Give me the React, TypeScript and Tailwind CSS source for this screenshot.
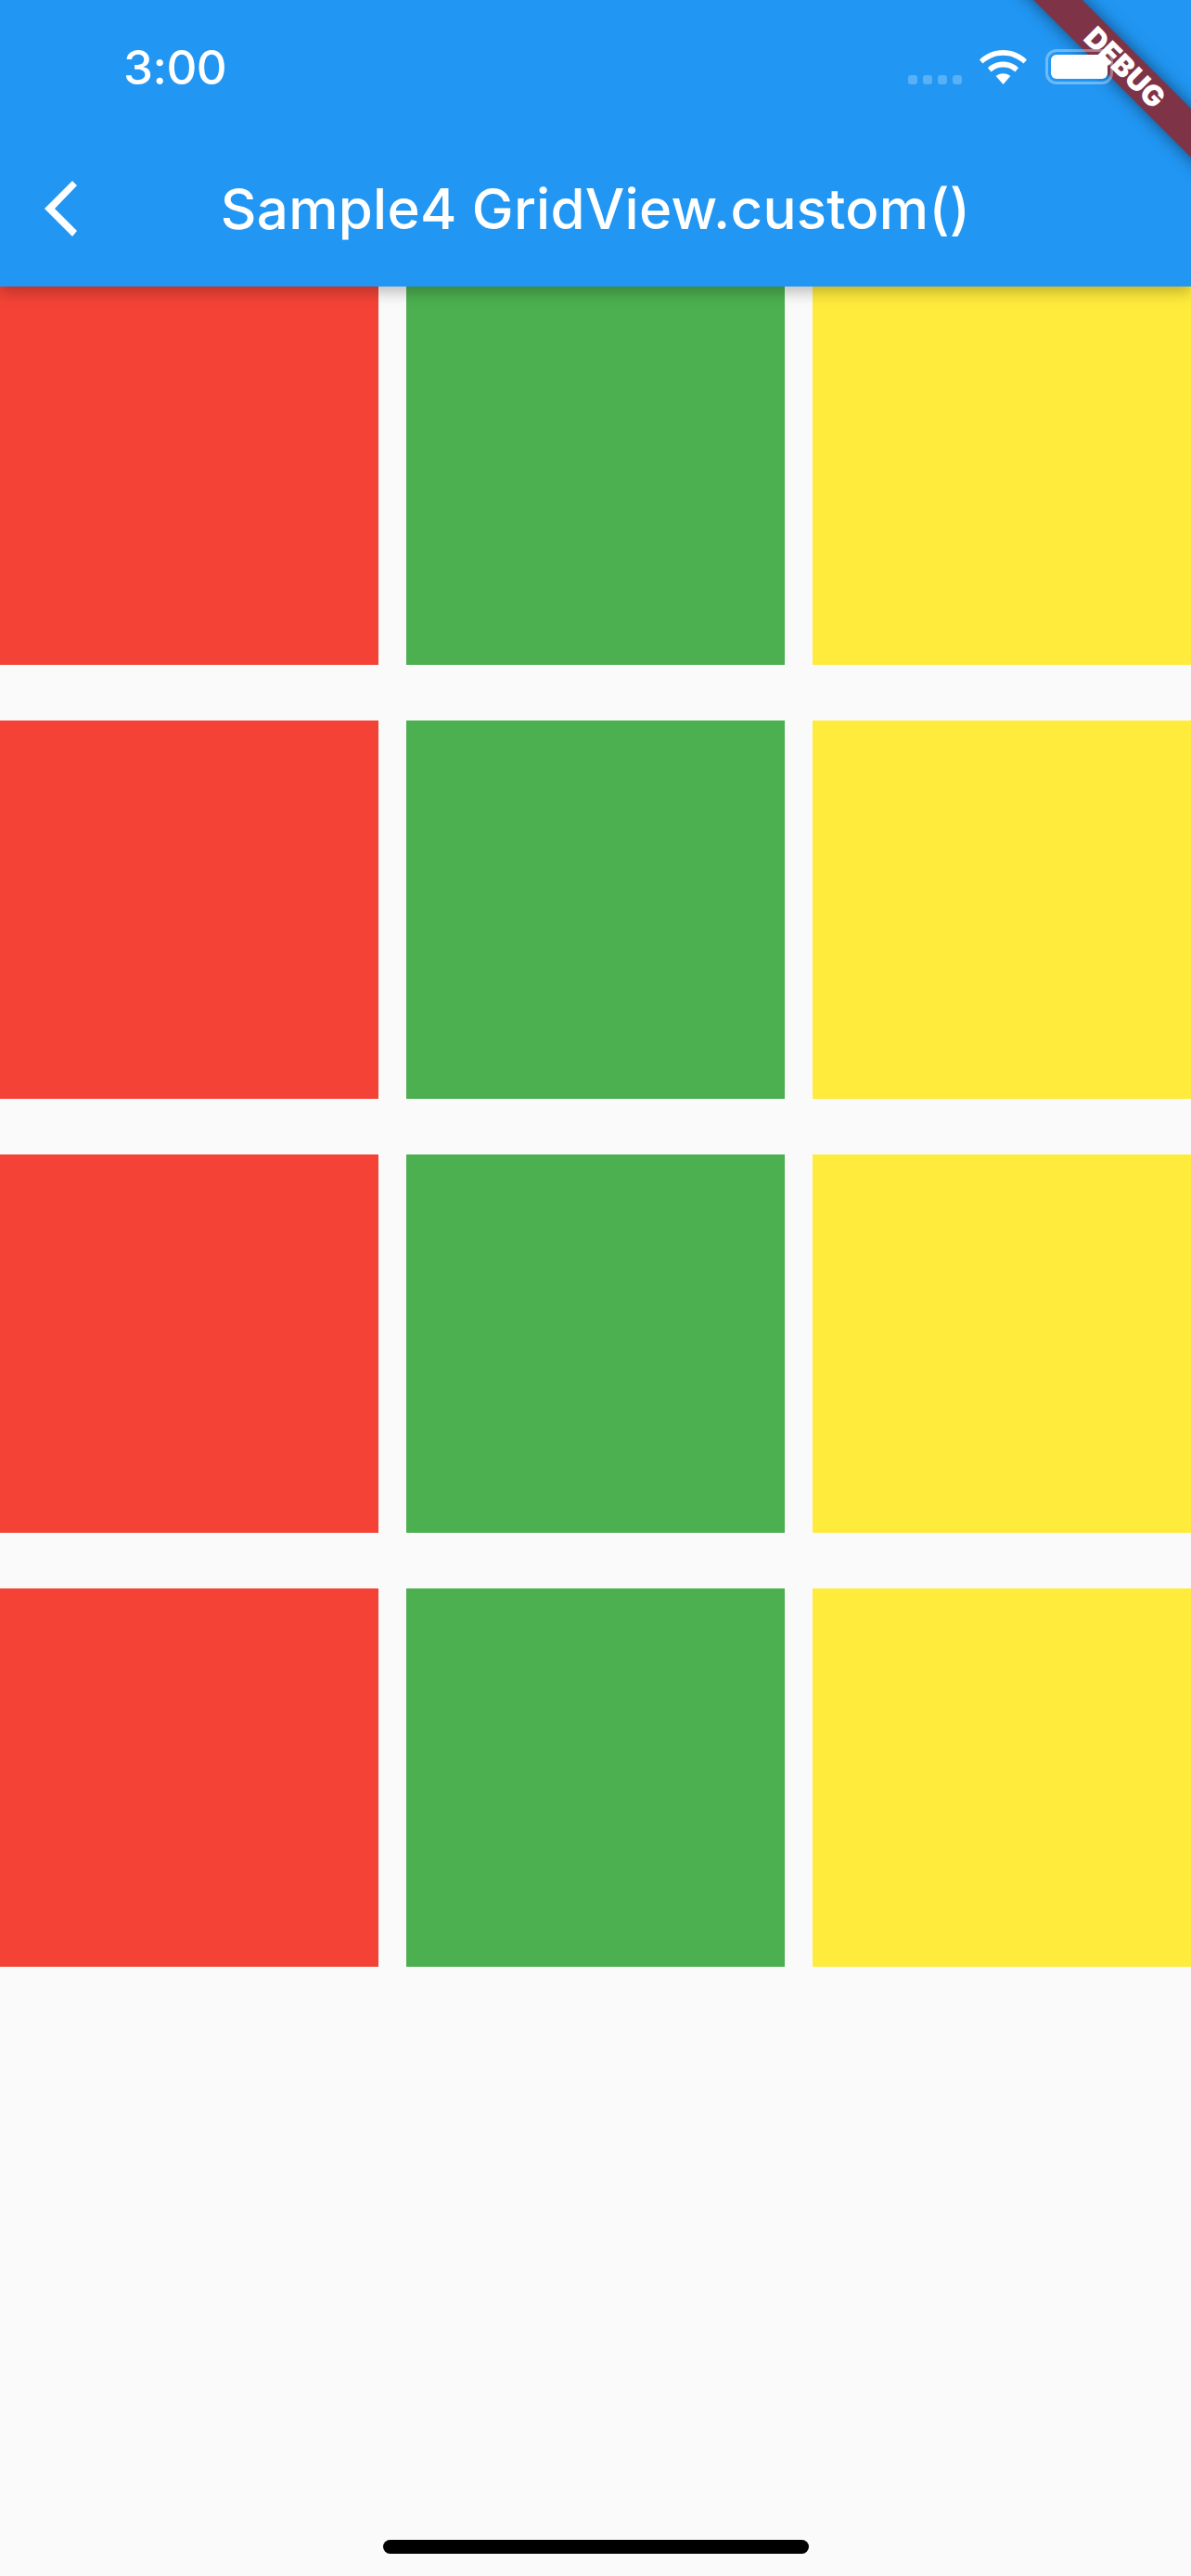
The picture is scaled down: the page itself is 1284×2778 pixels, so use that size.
import React from "react";

const rows = [0, 1, 2, 3];
const tileColors = ["bg-[#f44336]", "bg-[#4caf50]", "bg-[#ffeb3b]"];

function StatusBar() {
  return (
    <div className="flex h-[132px] items-start pl-[133px]">
      <span className="mt-[47px] text-[51px] leading-[52px] font-medium tracking-[-0.5px] text-white [font-family:Inter,sans-serif]">
        3:00
      </span>
      <div className="ml-auto flex items-start pr-[84px] pt-[53px]">
        <div className="mt-[28px] flex gap-[6px]">
          <span className="h-[10px] w-[10px] rounded-[3px] bg-white/25" />
          <span className="h-[10px] w-[10px] rounded-[3px] bg-white/25" />
          <span className="h-[10px] w-[10px] rounded-[3px] bg-white/25" />
          <span className="h-[10px] w-[10px] rounded-[3px] bg-white/25" />
        </div>
        <svg className="ml-[19px] mt-[1px]" width="51" height="37" viewBox="0 0 51 37" fill="#fff">
          <path d="M25.5 0C15.6 0 6.9 3.9 0 10.4L3.6 14.6C9.4 9.2 17 5.8 25.5 5.8S41.6 9.2 47.4 14.6L51 10.4C44.1 3.9 35.4 0 25.5 0Z" />
          <path d="M25.5 12.6C19 12.6 13.4 15 9 19.2L12.6 23.4C16 20.3 20.4 18.4 25.5 18.4S35 20.3 38.4 23.4L42 19.2C37.6 15 32 12.6 25.5 12.6Z" />
          <path d="M25.5 25.2C22.3 25.2 19.6 26.3 17.6 28.1L25.5 37L33.4 28.1C31.4 26.3 28.7 25.2 25.5 25.2Z" />
        </svg>
        {/* battery sits over the debug ribbon */}
        <div className="relative z-30 ml-[20px] h-[38px] w-[73px] rounded-[12px] border-[3px] border-white/35 p-[3px]">
          <div className="h-full w-full rounded-[6px] bg-white" />
        </div>
      </div>
    </div>
  );
}

function Toolbar() {
  return (
    <div className="relative flex h-[177px] items-start justify-center pt-[57px]">
      <svg
        className="absolute left-[48px] top-[63px]"
        width="35"
        height="60"
        viewBox="0 0 35 60"
        fill="#fff"
      >
        <path d="M30 0L35 5L11 30L35 54L30 60L0 30Z" />
      </svg>
      <h1 className="text-[60px] leading-[72px] font-medium tracking-[0.25px] text-white [font-family:Inter,sans-serif]">
        Sample4 GridView.custom()
      </h1>
    </div>
  );
}

export default function App() {
  return (
    <div className="relative h-[2778px] w-full overflow-hidden bg-[#fafafa]">
      <div className="relative h-[309px] bg-[#2196f3] shadow-[0_6px_15px_rgba(0,0,0,0.25)]">
        <StatusBar />
        <Toolbar />
      </div>
      <div className="grid grid-cols-3 gap-x-[30px] gap-y-[60px]">
        {rows.map((row) =>
          tileColors.map((color) => (
            <div key={`${row}-${color}`} className={`h-[408px] ${color}`} />
          ))
        )}
      </div>
      <div className="mx-auto mt-[618px] h-[15px] w-[459px] rounded-full bg-black" />
      {/* debug ribbon */}
      <div className="absolute left-[1053px] top-[53.5px] z-20 flex h-[37px] w-[320px] rotate-45 items-center justify-center bg-[#7f3347] shadow-[0_0_18px_rgba(0,0,0,0.5)]">
        <span className="text-[31px] leading-none font-black text-white [font-family:Inter,sans-serif]">
          DEBUG
        </span>
      </div>
    </div>
  );
}
